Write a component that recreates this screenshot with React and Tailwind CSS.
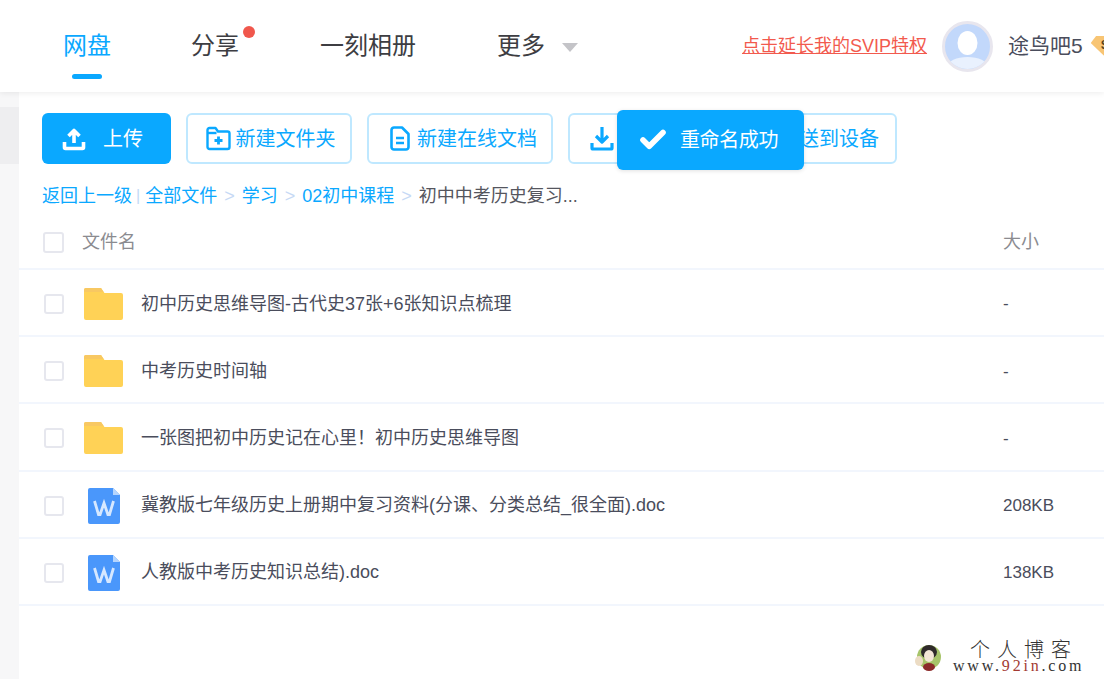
import { Check } from 'lucide-react';

const FONT = 'font-["Liberation_Sans","Noto_Sans_CJK_SC",sans-serif]';

const files = [
  { name: '初中历史思维导图-古代史37张+6张知识点梳理', size: '-', type: 'folder' },
  { name: '中考历史时间轴', size: '-', type: 'folder' },
  { name: '一张图把初中历史记在心里！初中历史思维导图', size: '-', type: 'folder' },
  { name: '冀教版七年级历史上册期中复习资料(分课、分类总结_很全面).doc', size: '208KB', type: 'doc' },
  { name: '人教版中考历史知识总结).doc', size: '138KB', type: 'doc' },
];

function UploadIcon() {
  return (
    <svg width="24" height="24" viewBox="0 0 24 24" fill="none" stroke="#fff" strokeWidth="3.6">
      <path d="M12 16V4M6.5 9L12 3.5 17.5 9" strokeLinejoin="round" />
      <path d="M2.5 15v5.5a1 1 0 0 0 1 1h17a1 1 0 0 0 1-1V15" strokeLinejoin="round" />
    </svg>
  );
}

function FolderPlusIcon() {
  return (
    <svg width="25" height="25" viewBox="0 0 25 25" fill="none" stroke="#0aa8ff" strokeWidth="2.4">
      <path d="M1.5 4a2 2 0 0 1 2-2h6l2.5 3.5h9.5a2 2 0 0 1 2 2V21a2 2 0 0 1-2 2h-18a2 2 0 0 1-2-2z" strokeLinejoin="round" />
      <path d="M1.5 7h9" />
      <path d="M12.5 10.5v8M8.5 14.5h8" strokeWidth="2.8" />
    </svg>
  );
}

function DocIcon() {
  return (
    <svg width="20" height="25" viewBox="0 0 20 25" fill="none" stroke="#0aa8ff" strokeWidth="2.6">
      <path d="M1.5 4a2.5 2.5 0 0 1 2.5-2.5h8l6.5 6.5v13a2.5 2.5 0 0 1-2.5 2.5H4A2.5 2.5 0 0 1 1.5 21z" strokeLinejoin="round" />
      <path d="M6 12h8M6 17h8" />
    </svg>
  );
}

function DownloadIcon() {
  return (
    <svg width="24" height="25" viewBox="0 0 24 25" fill="none" stroke="#0aa8ff" strokeWidth="3.2">
      <path d="M12 1v14M6 10l6 6 6-6" strokeLinejoin="round" />
      <path d="M2 17v5a1 1 0 0 0 1 1h18a1 1 0 0 0 1-1v-5" strokeLinejoin="round" />
    </svg>
  );
}

function FolderIcon() {
  return (
    <svg width="39" height="32" viewBox="0 0 39 32">
      <path d="M0 2a2 2 0 0 1 2-2h15l3.5 5H37a2 2 0 0 1 2 2v23a2 2 0 0 1-2 2H2a2 2 0 0 1-2-2z" fill="#ffd256" />
      <path d="M0 4V2a2 2 0 0 1 2-2h15l2.5 4z" fill="#f8c862" />
    </svg>
  );
}

function WordIcon() {
  return (
    <svg width="32" height="36" viewBox="0 0 32 36">
      <path d="M2 0h23l7 7v27a2 2 0 0 1-2 2H2a2 2 0 0 1-2-2V2a2 2 0 0 1 2-2z" fill="#4a97fb" />
      <path d="M25 0l7 7h-7z" fill="#b5d5fd" />
      <path d="M6.5 13l4 13.5h1.6L16 15l3.9 11.5h1.6l4-13.5" fill="none" stroke="#d6e8ff" strokeWidth="2.8" />
    </svg>
  );
}

function Checkbox({ size = 'w-[20px] h-[20px]' }) {
  return <div className={`${size} rounded-[3px] border-2 border-[#e6e7ee] bg-white shrink-0`} />;
}

function ToolButton({ icon, label, className }) {
  return (
    <div className={`h-[51px] flex items-center rounded-[6px] border-2 border-[#bfe8ff] text-[#0aa8ff] text-[20px] ${className}`}>
      {icon}
      {label && <span>{label}</span>}
    </div>
  );
}

export default function App() {
  return (
    <div className={`relative w-[1104px] h-[679px] overflow-hidden bg-white ${FONT}`}>
      {/* 顶部导航 */}
      <header className="relative z-10 h-[92px] bg-white flex items-center shadow-[0_1px_6px_rgba(0,0,0,0.08)] whitespace-nowrap">
        <nav className="flex items-center pl-[63px] text-[24px] text-[#3d3d42]">
          <span className="relative text-[#0aa8ff]">
            网盘
            <span className="absolute left-[9px] top-[46px] w-[30px] h-[5px] rounded-full bg-[#0aa8ff]" />
          </span>
          <span className="relative ml-[80px]">
            分享
            <span className="absolute left-[52px] top-[-2px] w-[12px] h-[12px] rounded-full bg-[#f0574c]" />
          </span>
          <span className="ml-[81px]">一刻相册</span>
          <span className="ml-[81px]">更多</span>
          <span className="ml-[17px] mt-[3px] w-0 h-0 border-x-[8px] border-x-transparent border-t-[9px] border-t-[#c4c4c8]" />
        </nav>
        <a className="ml-[164px] text-[18px] text-[#f25a4e] underline">点击延长我的SVIP特权</a>
        <div className="ml-[15px] w-[51px] h-[51px] rounded-full border-[3px] border-[#e8e6ee] bg-[#c2d8fb] overflow-hidden shrink-0">
          <svg width="45" height="45" viewBox="0 0 45 45">
            <ellipse cx="22.5" cy="19" rx="10" ry="12" fill="#fff" />
            <ellipse cx="22.5" cy="42" rx="20" ry="9" fill="#e9f1fe" />
          </svg>
        </div>
        <span className="ml-[15px] text-[21px] text-[#4a4d5c]">途鸟吧5</span>
        <div className="relative ml-[8px] mb-[1px] w-[26px] h-[20px] shrink-0 bg-[#f8c574] [clip-path:polygon(22%_0,78%_0,100%_38%,50%_100%,0_38%)]">
          <span className="absolute left-[10px] top-[2px] text-[12px] leading-[14px] font-bold text-[#5a4420]">S</span>
        </div>
      </header>

      <div className="flex h-[587px]">
        {/* 左侧栏露出部分 */}
        <aside className="w-[19px] shrink-0 bg-[#f7f7f8] pt-[15px]">
          <div className="h-[57px] bg-[#eeeef0]" />
        </aside>

        <main className="flex-1 min-w-0 whitespace-nowrap">
          {/* 工具栏 */}
          <div className="flex gap-[15px] pl-[23px] pt-[21px]">
            <div className="w-[129px] h-[51px] flex items-center justify-center gap-[17px] pr-[8px] rounded-[6px] bg-[#0aa8ff] text-white text-[20px]">
              <UploadIcon />
              <span>上传</span>
            </div>
            <ToolButton className="w-[166px] justify-center gap-[5px] pl-[3px]" icon={<FolderPlusIcon />} label="新建文件夹" />
            <ToolButton className="w-[186px] justify-center gap-[7px] pl-[7px]" icon={<DocIcon />} label="新建在线文档" />
            <ToolButton className="w-[154px] pl-[20px]" icon={<DownloadIcon />} />
            <ToolButton className="w-[160px] justify-end pr-[16px]" label="送到设备" />
          </div>

          {/* 面包屑 */}
          <div className="flex items-center pl-[23px] mt-[20px] h-[24px] text-[18px] text-[#0aa8ff]">
            <span>返回上一级</span>
            <span className="ml-[4px] mr-[5px] text-[#c3daf5] text-[16px]">|</span>
            <span>全部文件</span>
            <span className="mx-[7px] text-[#c6d9f5]">&gt;</span>
            <span>学习</span>
            <span className="mx-[7px] text-[#c6d9f5]">&gt;</span>
            <span>02初中课程</span>
            <span className="mx-[7px] text-[#c6d9f5]">&gt;</span>
            <span className="text-[#55565e]">初中中考历史复习...</span>
          </div>

          {/* 文件列表 */}
          <div className="flex items-center h-[58px] mt-[4px] pt-[4px] border-b-2 border-[#f2f6fd] text-[18px] text-[#8b8b90]">
            <div className="ml-[24px]"><Checkbox size="w-[21px] h-[21px]" /></div>
            <span className="ml-[18px]">文件名</span>
            <span className="ml-auto w-[101px]">大小</span>
          </div>
          {files.map(file => (
            <div key={file.name} className="flex items-center h-[67.2px] pt-[3px] border-b-2 border-[#f2f6fd] text-[18px] text-[#4a4d5c]">
              <div className="ml-[25px]"><Checkbox /></div>
              <div className="w-[39px] ml-[20px] flex justify-center">
                {file.type === 'folder' ? <FolderIcon /> : <WordIcon />}
              </div>
              <span className="ml-[18px]">{file.name}</span>
              <span className="ml-auto w-[101px] text-[17px]">{file.size}</span>
            </div>
          ))}
        </main>
      </div>

      {/* 提示 */}
      <div className="absolute left-[617px] top-[110px] w-[187px] h-[60px] rounded-[6px] bg-[#0aa8ff] flex items-center pl-[21px] gap-[12px] text-white text-[20px] tracking-[-0.4px] shadow-[0_1px_4px_rgba(0,0,0,0.12)] whitespace-nowrap">
        <Check size={30} strokeWidth={4.5} />
        <span>重命名成功</span>
      </div>

      {/* 水印 */}
      <div className="absolute left-[914px] top-[640px] w-[190px] h-[33px] flex items-center whitespace-nowrap">
        <svg width="28" height="30" viewBox="0 0 28 30">
          <circle cx="15" cy="15" r="12" fill="#a7c46a" />
          <ellipse cx="15" cy="10" rx="8" ry="7" fill="#2f2a2a" />
          <ellipse cx="15" cy="14" rx="5" ry="6" fill="#f4e6d6" />
          <ellipse cx="15" cy="25" rx="6" ry="4" fill="#8c2a2a" />
          <ellipse cx="5" cy="19" rx="4" ry="5" fill="#ecdcc4" />
        </svg>
        <div className="ml-[11px] relative h-[33px] w-[140px] font-['Liberation_Serif','Noto_Sans_CJK_SC',serif] text-[#333]">
          <span className="absolute left-[17px] top-[1px] text-[20px] leading-[18px] tracking-[7px] font-light">个人博客</span>
          <span className="absolute left-0 top-[19px] text-[16px] leading-[14px] tracking-[2.8px]">
            www.<span className="text-[#a33a32]">92in</span>.com
          </span>
        </div>
      </div>
    </div>
  );
}
